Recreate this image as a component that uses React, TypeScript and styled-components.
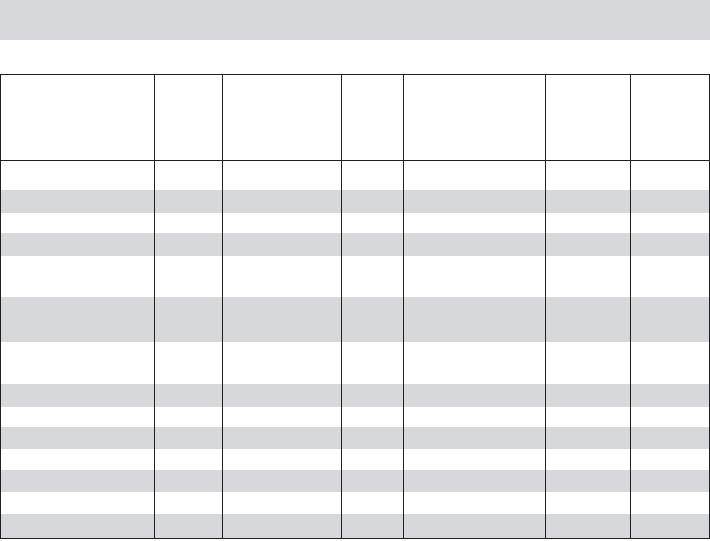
import styled, { createGlobalStyle } from "styled-components";

const GlobalStyle = createGlobalStyle`
  html, body {
    margin: 0;
    padding: 0;
    background: #ffffff;
    font-family: "Liberation Sans", Arial, sans-serif;
  }
`;

const columns = [154, 68, 119, 62, 142, 85, 79];

// row heights in px, striped from white
const rows = [29, 23, 20, 23, 41, 45, 42, 23, 20, 22, 21, 22, 22, 24];

const Page = styled.div`
  width: 710px;
  display: flex;
  flex-direction: column;
`;

const TopBar = styled.div`
  height: 40px;
  background: #d7d8dc;
  margin-bottom: 34px;
`;

const Table = styled.div`
  display: grid;
  grid-template-columns: ${columns.map((c) => `${c}px`).join(" ")};
  border-top: 1px solid #231f20;
  border-left: 1px solid #231f20;
  border-bottom: 1px solid #231f20;
  box-sizing: border-box;
  width: 710px;
`;

const HeadCell = styled.div`
  height: 85px;
  border-right: 1px solid #231f20;
  border-bottom: 1px solid #231f20;
  box-sizing: border-box;
  height: 86px;
`;

const Cell = styled.div<{ $h: number; $shaded: boolean }>`
  height: ${(p) => p.$h}px;
  background: ${(p) => (p.$shaded ? "#d7d8dc" : "#ffffff")};
  border-right: 1px solid #231f20;
  box-sizing: border-box;
`;

export default function App() {
  return (
    <>
      <GlobalStyle />
      <Page>
        <TopBar />
        <Table>
          {columns.map((_, i) => (
            <HeadCell key={`h${i}`} />
          ))}
          {rows.map((h, r) =>
            columns.map((_, c) => <Cell key={`${r}-${c}`} $h={h} $shaded={r % 2 === 1} />)
          )}
        </Table>
      </Page>
    </>
  );
}
